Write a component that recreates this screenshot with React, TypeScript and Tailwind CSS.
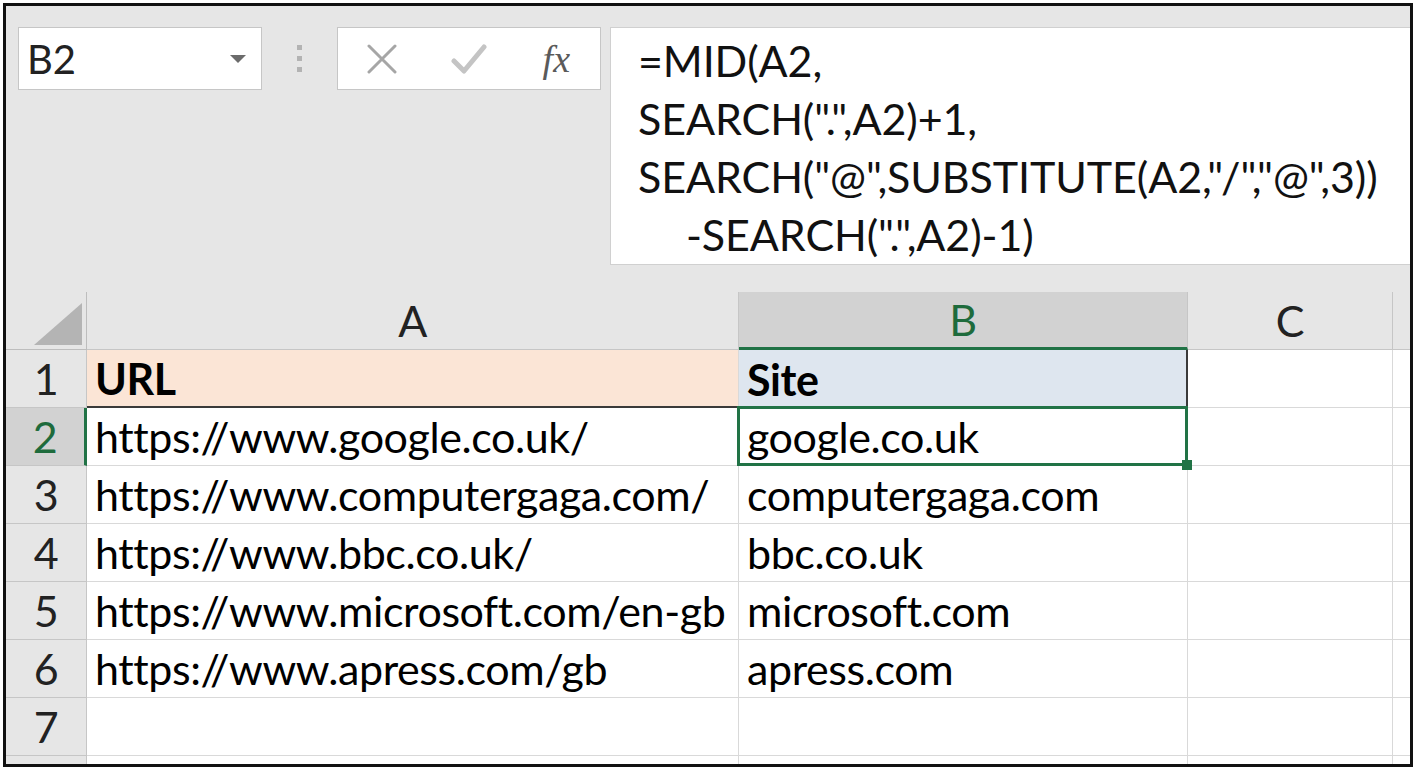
import React from 'react';

const FONT = { fontFamily: 'Lato, "Open Sans", sans-serif' };

const rows: { n: number; a: string; b: string }[] = [
  { n: 1, a: 'URL', b: 'Site' },
  { n: 2, a: 'https://www.google.co.uk/', b: 'google.co.uk' },
  { n: 3, a: 'https://www.computergaga.com/', b: 'computergaga.com' },
  { n: 4, a: 'https://www.bbc.co.uk/', b: 'bbc.co.uk' },
  { n: 5, a: 'https://www.microsoft.com/en-gb', b: 'microsoft.com' },
  { n: 6, a: 'https://www.apress.com/gb', b: 'apress.com' },
  { n: 7, a: '', b: '' },
];

function Toolbar() {
  return (
    <div className="flex h-[286px] shrink-0 items-start bg-[#e6e6e6] pt-[21px]">
      {/* Name box */}
      <div className="ml-[12px] flex h-[63px] w-[244px] items-center justify-between border border-[#c6c6c6] bg-white pl-[8px] pr-[14px]">
        <span className="text-[40px] leading-none text-[#222]">B2</span>
        <svg width="18" height="10" viewBox="0 0 18 10">
          <path d="M1 1h16L9 9z" fill="#6b6b6b" />
        </svg>
      </div>

      {/* Grip dots */}
      <div className="flex h-[63px] w-[75px] flex-col items-center justify-center gap-[6px]">
        <span className="h-[5px] w-[5px] bg-[#b3b3b3]" />
        <span className="h-[5px] w-[5px] bg-[#b3b3b3]" />
        <span className="h-[5px] w-[5px] bg-[#b3b3b3]" />
      </div>

      {/* Cancel / Enter / fx */}
      <div className="flex h-[63px] w-[264px] items-center border border-[#c6c6c6] bg-white">
        <div className="flex w-[88px] justify-center">
          <svg width="32" height="30" viewBox="0 0 32 30">
            <path d="M3 2 L29 28 M29 2 L3 28" stroke="#a6a6a6" strokeWidth="3" strokeLinecap="round" />
          </svg>
        </div>
        <div className="flex w-[88px] justify-center">
          <svg width="36" height="30" viewBox="0 0 36 30">
            <path d="M3 17 L13 27 L33 3" stroke="#c4c4c4" strokeWidth="5" fill="none" strokeLinecap="round" strokeLinejoin="round" />
          </svg>
        </div>
        <div className="flex w-[88px] justify-center">
          <span
            className="text-[38px] italic leading-none text-[#5a5a5a]"
            style={{ fontFamily: '"Liberation Serif", serif' }}
          >
            fx
          </span>
        </div>
      </div>

      {/* Formula bar */}
      <div className="ml-[9px] h-[238px] flex-1 whitespace-nowrap border-l border-t border-b border-[#d0d0d0] bg-white pl-[27px] pt-[4px] text-[43px] leading-[58px] tracking-[-0.1px] text-[#111]">
        <div>=MID(A2,</div>
        <div>SEARCH(".",A2)+1,</div>
        <div>SEARCH("@",SUBSTITUTE(A2,"/","@",3))</div>
        <div className="pl-[48px]">-SEARCH(".",A2)-1)</div>
      </div>
    </div>
  );
}

function Grid() {
  const line = 'border-r border-b border-[#d9d9d9]';
  return (
    <div className="grid flex-1 grid-cols-[81px_652px_449px_205px_1fr] grid-rows-[58px_repeat(7,58px)_1fr] whitespace-nowrap text-[43px] leading-none tracking-[-0.4px]">
      {/* Header row */}
      <div className="flex items-end justify-end border-r border-b border-[#bdbdbd] bg-[#e6e6e6] pb-[4px] pr-[4px]">
        <svg width="48" height="42" viewBox="0 0 48 42">
          <path d="M48 0 L48 42 L0 42 Z" fill="#b4b4b4" />
        </svg>
      </div>
      <div className="flex items-center justify-center border-r border-b border-[#c6c6c6] bg-[#e6e6e6] text-[#222]">A</div>
      <div className="flex items-center justify-center border-r border-b-[3px] border-r-[#c6c6c6] border-b-[#217346] bg-[#d2d2d2] text-[#1e6b3c]">B</div>
      <div className="flex items-center justify-center border-r border-b border-[#c6c6c6] bg-[#e6e6e6] text-[#222]">C</div>
      <div className="border-b border-[#c6c6c6] bg-[#e6e6e6]" />

      {rows.map((r) => {
        const sel = r.n === 2;
        const head = r.n === 1;
        return (
          <React.Fragment key={r.n}>
            <div
              className={
                sel
                  ? 'flex items-center justify-center border-r-[3px] border-b border-r-[#217346] border-b-[#c6c6c6] bg-[#d2d2d2] text-[#1e6b3c]'
                  : 'flex items-center justify-center border-r border-b border-[#c6c6c6] bg-[#e6e6e6] text-[#222]'
              }
            >
              {r.n}
            </div>
            <div
              className={
                head
                  ? 'flex items-center border-r border-b-2 border-r-[#d9d9d9] border-b-[#3a3a3a] bg-[#fbe5d6] pl-[8px] font-bold text-black'
                  : `flex items-center ${line} bg-white pl-[8px] text-black`
              }
            >
              {r.a}
            </div>
            <div
              className={
                head
                  ? 'flex items-center border-r-2 border-r-[#3a3a3a] bg-[#dee6ef] pl-[8px] font-bold text-black'
                  : `relative flex items-center ${line} bg-white pl-[8px] text-black`
              }
            >
              {r.b}
              {sel && (
                <>
                  <span className="pointer-events-none absolute -left-[2px] -top-[2px] -right-[1px] -bottom-[1px] z-10 border-[3px] border-[#217346]" />
                  <span className="absolute -bottom-[5px] -right-[5px] z-20 h-[10px] w-[10px] bg-[#217346]" />
                </>
              )}
            </div>
            <div className={`${line} bg-white`} />
            <div className="border-b border-[#d9d9d9] bg-white" />
          </React.Fragment>
        );
      })}

      {/* Partial row */}
      <div className="border-r border-[#c6c6c6] bg-[#e6e6e6]" />
      <div className="border-r border-[#d9d9d9] bg-white" />
      <div className="border-r border-[#d9d9d9] bg-white" />
      <div className="border-r border-[#d9d9d9] bg-white" />
      <div className="bg-white" />
    </div>
  );
}

export default function App() {
  return (
    <div className="h-[772px] w-[1418px] bg-white pl-[3px] pt-[3px]" style={FONT}>
      <div className="flex h-[764px] w-[1410px] flex-col overflow-hidden border-[3px] border-[#111]">
        <Toolbar />
        <Grid />
      </div>
    </div>
  );
}
